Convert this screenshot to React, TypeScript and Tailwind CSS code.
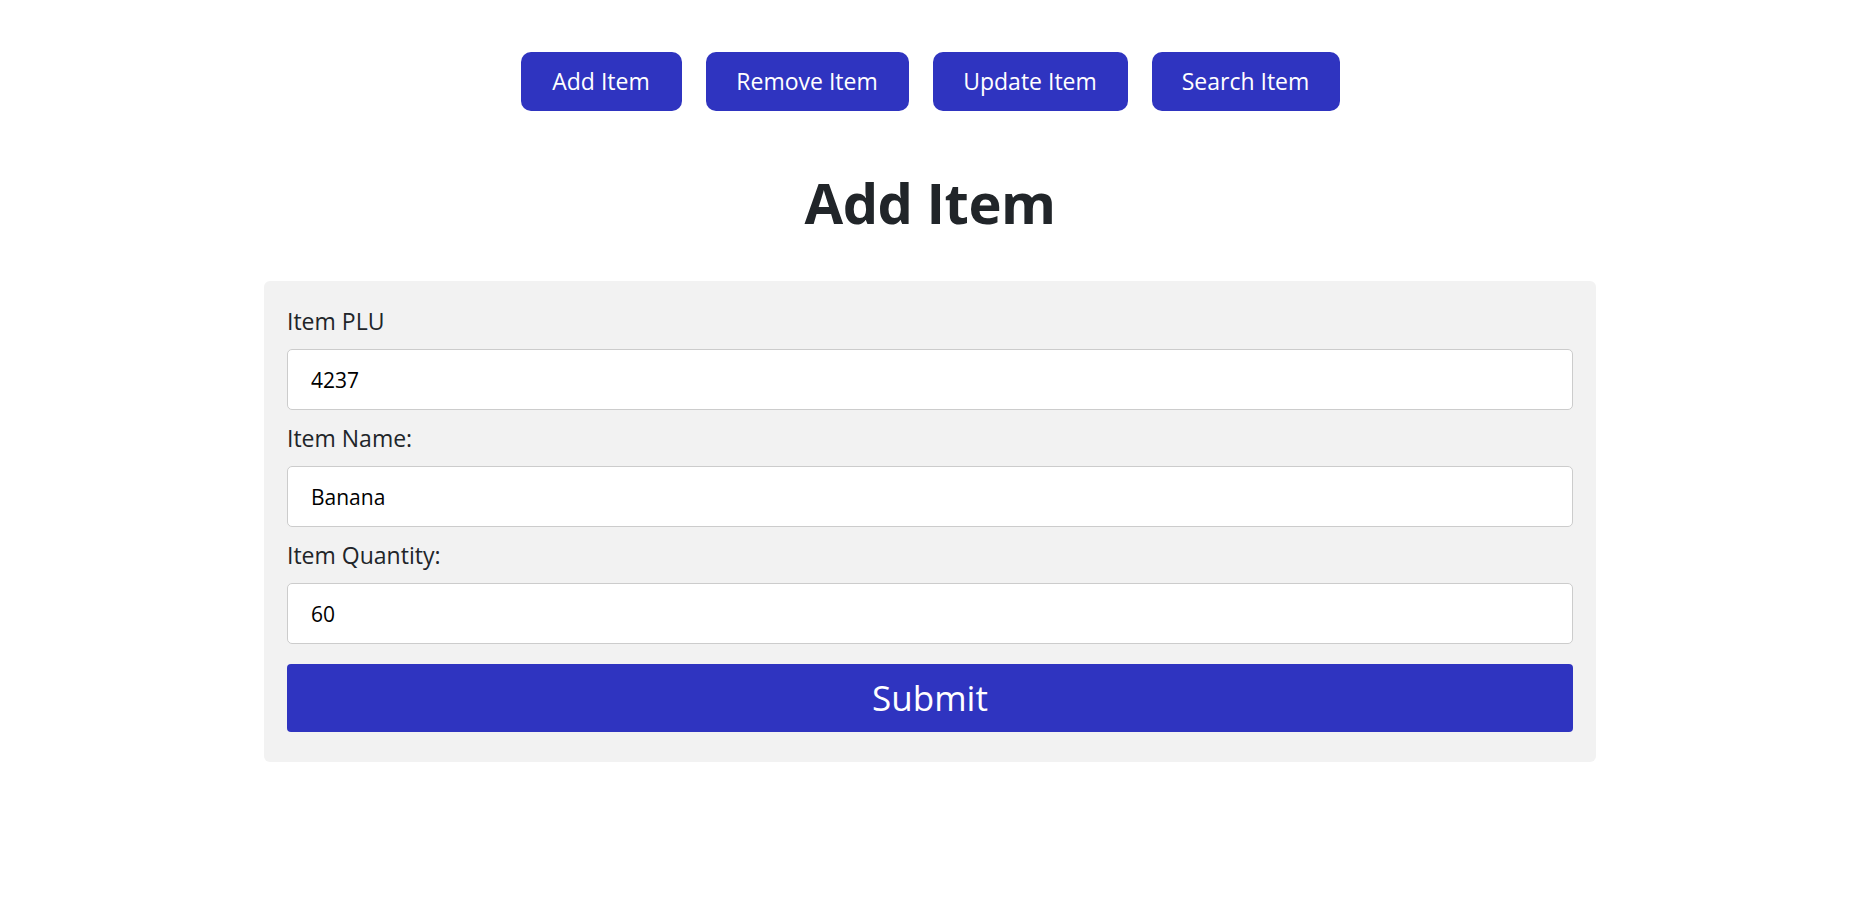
const navItems = [
  { label: "Add Item", width: "w-[161px]" },
  { label: "Remove Item", width: "w-[203px]" },
  { label: "Update Item", width: "w-[195px]" },
  { label: "Search Item", width: "w-[188px]" },
];

const fields = [
  { id: "plu", label: "Item PLU", value: "4237" },
  { id: "name", label: "Item Name:", value: "Banana" },
  { id: "qty", label: "Item Quantity:", value: "60" },
];

export default function App() {
  return (
    <div className="min-h-screen bg-white pr-[7px] text-[#212529] font-['Open_Sans',sans-serif]">
      {/* Nav */}
      <nav className="flex justify-center gap-[24px] pt-[52px]">
        {navItems.map((item) => (
          <button
            key={item.label}
            className={[
              "h-[59px] rounded-[10px] bg-[#2f34c0] text-[23px] text-white flex items-center justify-center",
              item.width,
            ].join(" ")}
          >
            {item.label}
          </button>
        ))}
      </nav>

      <h1 className="mt-[55px] text-center text-[56px] leading-[72px] font-bold tracking-[-0.5px]">
        Add Item
      </h1>

      {/* Form */}
      <form
        className="mx-auto mt-[43px] w-[1332px] rounded-[6px] bg-[#f2f2f2] px-[23px] pt-[22px] pb-[30px]"
        onSubmit={(e) => e.preventDefault()}
      >
        {fields.map((f) => (
          <div key={f.id} className="flex flex-col">
            <label htmlFor={f.id} className="block text-[23px] leading-[36px]">
              {f.label}
            </label>
            <input
              id={f.id}
              defaultValue={f.value}
              className="mt-[10px] mb-[10px] block h-[61px] w-full rounded-[5px] border border-[#cccccc] bg-white px-[23px] text-[21px] text-black outline-none"
            />
          </div>
        ))}
        <button
          type="submit"
          className="mt-[10px] block h-[68px] w-full rounded-[4px] bg-[#2f34c0] text-[35px] text-white"
        >
          Submit
        </button>
      </form>
    </div>
  );
}
